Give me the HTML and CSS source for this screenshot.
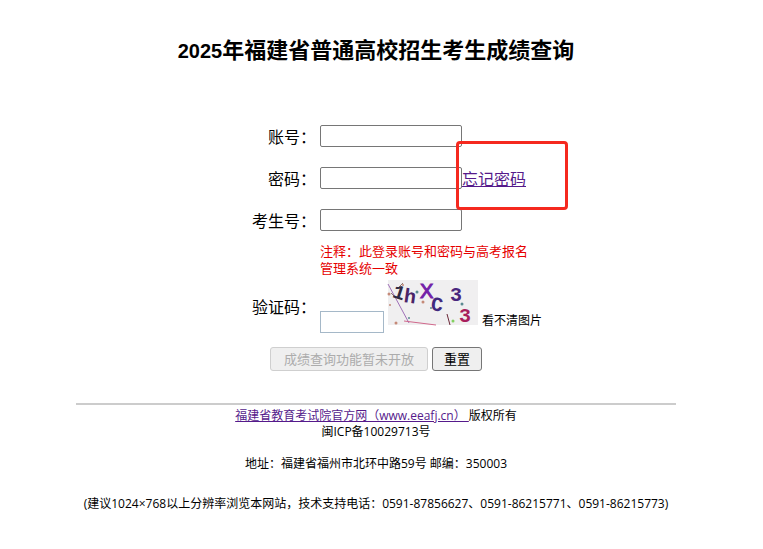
FILE: index.html
```
<!DOCTYPE html>
<html lang="zh-CN">
<head>
    <meta charset="UTF-8">
    <meta name="viewport" content="width=device-width, initial-scale=1.0">
    <title>2025年福建省普通高校招生考生成绩查询</title>
    <link rel="stylesheet" href="styles.css">
</head>
<body>
    <div class="container">
        <h1><span class="year">2025</span>年福建省普通高校招生考生成绩查询</h1>

        <form>
            <div class="row">
                <label for="account">账号：</label>
                <input type="text" id="account">
            </div>
            <div class="row">
                <label for="password">密码：</label>
                <div class="field">
                    <input type="password" id="password">
                    <a class="forget" href="#">忘记密码</a>
                    <span class="mark"></span>
                </div>
            </div>
            <div class="row">
                <label for="studentNo">考生号：</label>
                <input type="text" id="studentNo">
            </div>
            <p class="note">注释：此登录账号和密码与高考报名管理系统一致</p>
            <div class="row code-row">
                <label for="code">验证码：</label>
                <div class="code">
                    <input type="text" id="code">
                    <svg class="captcha" width="90" height="45" viewBox="0 0 90 45">
                        <rect width="90" height="45" fill="#f0eff0"/>
                        <path d="M0 4L21 43" stroke="#a070b8" fill="none"/>
                        <path d="M16 41L48 45" stroke="#d0688c" fill="none"/>
                        <path d="M59 34l3 11" stroke="#6b2838" fill="none"/>
                        <path d="M3 13l5 5M11 7l4-4" stroke="#8b7770" fill="none"/>
                        <g font-family="Liberation Mono" font-weight="bold" font-size="20">
                            <text x="5" y="19" fill="#302a42" transform="rotate(18 11 13)">1</text>
                            <text x="16" y="23" fill="#4a2468" transform="rotate(8 22 17)">h</text>
                            <text x="32" y="18" fill="#7320a8" font-family="Liberation Sans" font-weight="normal" stroke="#7320a8">X</text>
                            <text x="43" y="31" fill="#41297e" transform="rotate(8 49 25)">C</text>
                            <text x="62" y="21" fill="#49257d">3</text>
                            <text x="71" y="42" fill="#a81e5c">3</text>
                        </g>
                        <g fill="#5b8b91">
                            <circle cx="29" cy="12" r="1.5"/>
                            <circle cx="43" cy="28" r="1"/>
                            <circle cx="74" cy="24" r="1.5"/>
                            <circle cx="21" cy="38" r="1"/>
                        </g>
                        <g fill="#c58a78">
                            <circle cx="35" cy="22" r="1.5"/>
                            <circle cx="1" cy="14" r="1.5"/>
                            <circle cx="2" cy="25" r="1"/>
                            <circle cx="8" cy="43" r="1.5"/>
                            <circle cx="15" cy="5" r="1"/>
                        </g>
                        <circle cx="65" cy="41" r="1.5" fill="#83d060"/>
                    </svg>
                    <span class="refresh">看不清图片</span>
                </div>
            </div>
            <div class="buttons">
                <button type="submit" class="query" disabled>成绩查询功能暂未开放</button>
                <button type="reset">重置</button>
            </div>
        </form>

        <footer>
            <p><a href="#">福建省教育考试院官方网（www.eeafj.cn）&nbsp;</a>版权所有</p>
            <p>闽ICP备10029713号</p>
            <p class="address">地址：福建省福州市北环中路59号 邮编：350003</p>
            <p class="support">(建议1024×768以上分辨率浏览本网站，技术支持电话：0591-87856627、0591-86215771、0591-86215773)</p>
        </footer>
    </div>
</body>
</html>
```
FILE: styles.css
```
body {
    margin: 0;
    padding: 32px 11px 0 0;
    font-family: "Open Sans", "Noto Sans CJK SC", sans-serif;
    font-size: 16px;
    color: #000;
    background: #fff;
}
.container {
    max-width: 600px;
    margin: 0 auto;
}
h1 {
    margin: 0 0 48px;
    font-family: "Noto Sans CJK SC", sans-serif;
    font-size: 22px;
    line-height: 32px;
    text-align: center;
}
.year {
    font-family: "Liberation Sans", sans-serif;
    font-size: 20px;
}
a {
    color: #551a8b;
}
.row {
    display: grid;
    grid-template-columns: 40% 1fr;
    column-gap: 4px;
    align-items: center;
    height: 42px;
}
.row label {
    text-align: right;
}
input {
    box-sizing: border-box;
    width: 142px;
    height: 22px;
    margin: 0;
    border: 1px solid #767676;
    border-radius: 2px;
    background: #fff;
}
.field {
    display: flex;
    align-items: center;
    position: relative;
}
.mark {
    position: absolute;
    left: 136px;
    top: -25px;
    box-sizing: border-box;
    width: 112px;
    height: 69px;
    border: 3px solid #f5291f;
    border-radius: 4px;
}
.note {
    width: 210px;
    margin: 2px 0 2px 244px;
    font-size: 13px;
    line-height: 17px;
    color: #e60000;
}
.code-row {
    height: 54px;
}
.code {
    display: flex;
    align-items: flex-end;
}
.code input {
    width: 64px;
    border-color: #a5b8c8;
    border-radius: 0;
}
.captcha {
    margin: 0 4px 8px;
    overflow: visible;
}
.refresh {
    font-size: 12px;
    line-height: 24px;
}
.buttons {
    display: flex;
    justify-content: center;
    gap: 4px;
    margin-top: 14px;
}
button {
    height: 24px;
    padding: 0 11px;
    border: 1px solid #767676;
    border-radius: 3px;
    background: #efefef;
    font-family: inherit;
    font-size: 13px;
    line-height: 20px;
    color: #000;
}
.query {
    padding: 0 13px;
}
button:disabled {
    border-color: #cfcfcf;
    color: #acacac;
}
footer {
    margin-top: 32px;
    padding-top: 3px;
    border-top: 2px solid #ccc;
    font-size: 12px;
    line-height: 16px;
    text-align: center;
}
footer p {
    margin: 0;
}
footer .address {
    margin-top: 16px;
}
footer .support {
    margin-top: 24px;
    white-space: nowrap;
}
```
